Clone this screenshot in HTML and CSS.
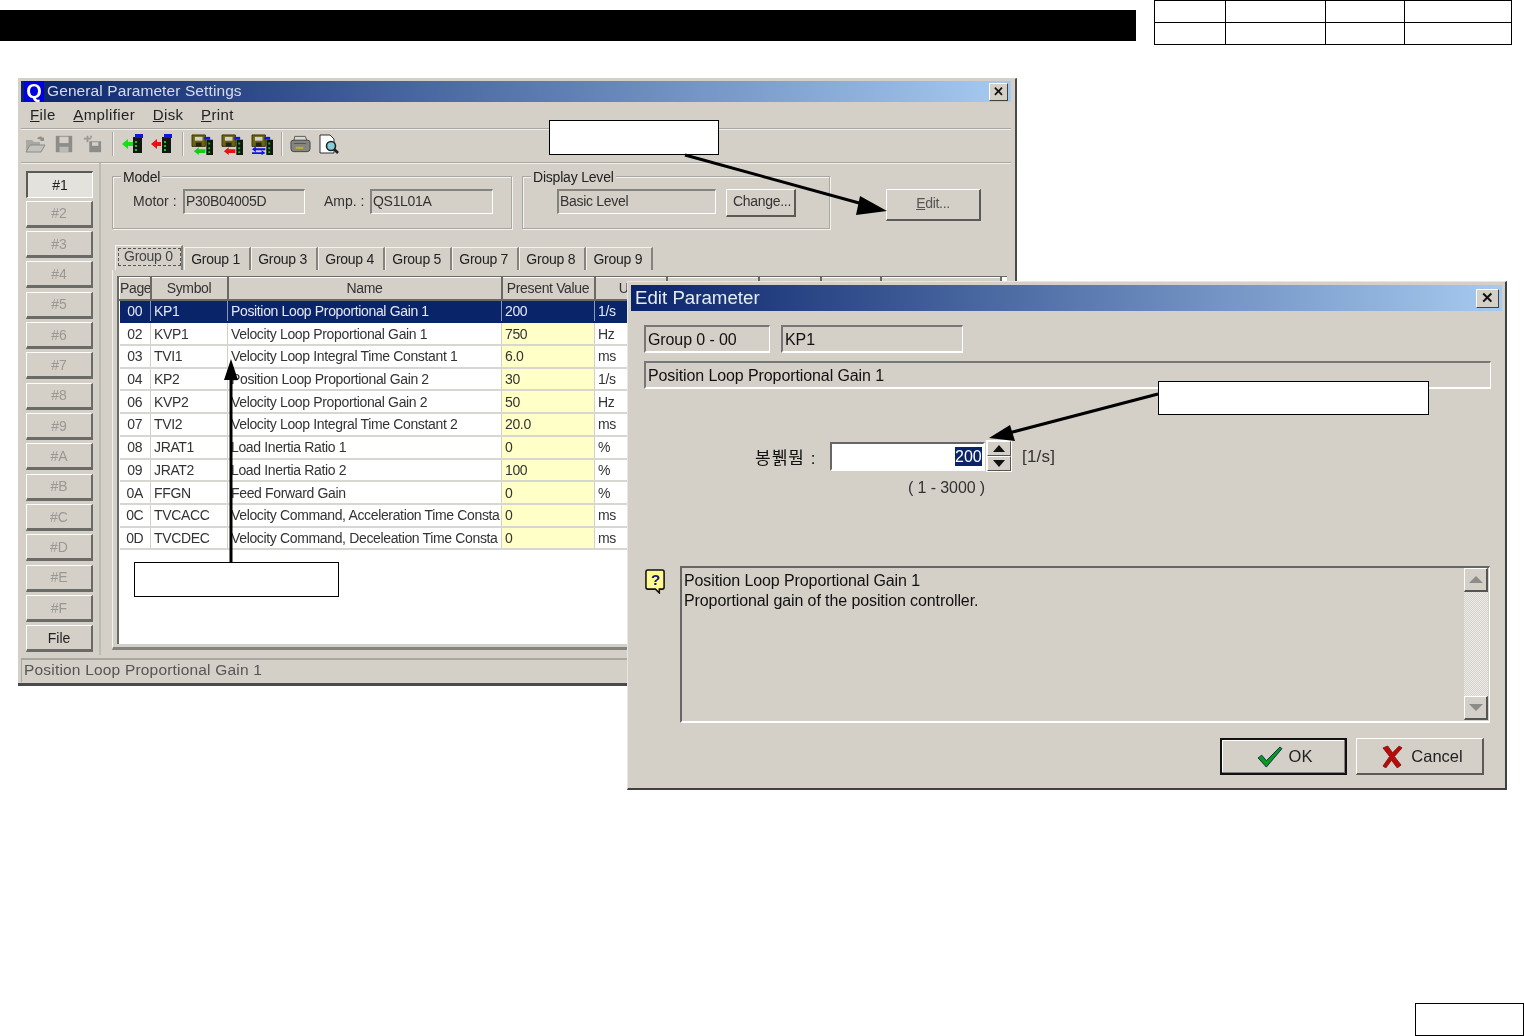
FILE: index.html
```html
<!DOCTYPE html>
<html lang="en">
<head>
<meta charset="utf-8">
<title>General Parameter Settings</title>
<link rel="stylesheet" href="styles.css">
</head>
<body>
<svg class="defs" width="0" height="0" aria-hidden="true">
  <defs>
    <symbol id="folder" viewBox="0 0 22 20"><path d="M2 6h6l2 2h6v3H7L3 17H2z" fill="#a8a8a4"/><path d="M6 11h15l-4 7H2z" fill="#c4c2bc" stroke="#8a8a86"/><path d="M13 5c2-3 4-3 6-1l1-1v4h-4l1-1c-1-1-2-1-4-1z" fill="#8f8f8b"/></symbol>
    <symbol id="disk" viewBox="0 0 22 20"><path d="M2 1h18v18H2z" fill="#8c8c88"/><path d="M6 2h10v7H6z" fill="#d4d0c8"/><path d="M6 13h10v6H6z" fill="#bcbab4"/></symbol>
    <symbol id="disks" viewBox="0 0 22 20"><path d="M8 7h13v12H8z" fill="#8c8c88"/><path d="M11 8h7v4h-7z" fill="#d4d0c8"/><path d="M2 3h3V1h2v2h3v2H7v3H5V5H2z" fill="#9a9a96"/><path d="M9 1h2v2H9z" fill="#9a9a96"/></symbol>
    <symbol id="pc" viewBox="0 0 24 22"><path d="M1 1h14v12H1z" fill="#6a6410" stroke="#3a3808"/><path d="M4 3h8v4H4z" fill="#d4d0c8"/><path d="M5 9h6v4H5z" fill="#222"/><path d="M14 3h6v3h-6z" fill="#1414e0"/><path d="M16 6h7v16h-7z" fill="#101810"/><path d="M18 9h2v2h-2zM18 14h2v2h-2zM18 18h2v2h-2z" fill="#20b020"/></symbol>
    <symbol id="printer" viewBox="0 0 22 20"><path d="M5 2h11l2 5H4z" fill="#d8d8d4" stroke="#555"/><path d="M1 8q0-2 3-2h14q3 0 3 2v7q0 3-3 3H4q-3 0-3-3z" fill="#85857f" stroke="#444"/><path d="M6 13h8v2H6z" fill="#c8b020"/><path d="M4 9h13v1H4z" fill="#555"/></symbol>
    <symbol id="preview" viewBox="0 0 22 20"><path d="M2 1h10l4 4v14H2z" fill="#fff" stroke="#333"/><circle cx="13" cy="12" r="4.5" fill="#7fd0d8" stroke="#222" stroke-width="1.6"/><path d="M16 15l4 4" stroke="#222" stroke-width="2.6"/></symbol>
  </defs>
</svg>
<div class="page">
  <header class="head">
    <div class="bar"></div>
    <table class="stamp">
      <tr><td class="s1"></td><td class="s2"></td><td class="s3"></td><td class="s4"></td></tr>
      <tr><td></td><td></td><td></td><td></td></tr>
    </table>
  </header>

  <section class="win main">
    <div class="title">
      <span class="qlogo">Q</span>
      <span class="title-text">General Parameter Settings</span>
      <span class="close main-close">✕</span>
    </div>
    <nav class="menu">
      <span><u>F</u>ile</span><span><u>A</u>mplifier</span><span><u>D</u>isk</span><span><u>P</u>rint</span>
    </nav>
    <div class="tools">
      <svg class="ti" width="22" height="20"><use href="#folder"/></svg>
      <svg class="ti tg" width="20" height="20"><use href="#disk"/></svg>
      <svg class="ti tw" width="20" height="20"><use href="#disks"/></svg>
      <i class="tsep"></i>
      <svg class="ti" width="22" height="20" viewBox="0 0 22 20"><path d="M1 10l6-5v3h5v4H7v3z" fill="#14e014"/><path d="M12 3h9v16h-9z" fill="#101810"/><path d="M14 0h8v4h-8z" fill="#1414e0"/><path d="M14 7h2v2h-2zM14 11h2v2h-2zM14 15h2v2h-2z" fill="#20c020"/></svg>
      <svg class="ti tx" width="22" height="20" viewBox="0 0 22 20"><path d="M1 10l6-5v3h4v4H7v3z" fill="#ee1010"/><path d="M12 3h9v16h-9z" fill="#101810"/><path d="M14 0h8v4h-8z" fill="#1414e0"/><path d="M14 7h2v2h-2zM14 11h2v2h-2zM14 15h2v2h-2z" fill="#20c020"/></svg>
      <i class="tsep"></i>
      <svg class="ti" width="23" height="21" viewBox="0 0 24 22"><use href="#pc"/><path d="M3 18l5-4v2h7v4H8v2z" fill="#10d010"/></svg>
      <svg class="ti" width="23" height="21" viewBox="0 0 24 22"><use href="#pc"/><path d="M3 18l5-4v2h7v4H8v2z" fill="#e81010"/></svg>
      <svg class="ti ty" width="23" height="21" viewBox="0 0 24 22"><use href="#pc"/><path d="M1 16l4-3v2h10v2H5v2zM15 20l-4 2v-1H1v-2h10v-2z" fill="#1010e8"/></svg>
      <i class="tsep"></i>
      <svg class="ti" width="21" height="20"><use href="#printer"/></svg>
      <svg class="ti" width="22" height="20"><use href="#preview"/></svg>
    </div>
    <div class="work">
      <aside class="side">
        <button class="pbtn on">#1</button>
        <button class="pbtn">#2</button><button class="pbtn">#3</button><button class="pbtn">#4</button>
        <button class="pbtn">#5</button><button class="pbtn">#6</button><button class="pbtn">#7</button>
        <button class="pbtn">#8</button><button class="pbtn">#9</button><button class="pbtn">#A</button>
        <button class="pbtn">#B</button><button class="pbtn">#C</button><button class="pbtn">#D</button>
        <button class="pbtn">#E</button><button class="pbtn">#F</button>
        <button class="pbtn file">File</button>
      </aside>
      <div class="content">
        <div class="groups">
          <div class="grp model">
            <span class="legend">Model</span>
            <label class="lab l-motor">Motor :</label><span class="field f-motor">P30B04005D</span>
            <label class="lab l-amp">Amp. :</label><span class="field f-amp">QS1L01A</span>
          </div>
          <div class="grp level">
            <span class="legend">Display Level</span>
            <span class="field f-level">Basic Level</span>
            <button class="wbtn change">Change...</button>
          </div>
          <button class="wbtn edit"><span><u>E</u>dit...</span></button>
        </div>
        <div class="tabs">
          <span class="tab active"><span>Group 0</span></span>
          <span class="tab">Group 1</span><span class="tab">Group 3</span><span class="tab">Group 4</span>
          <span class="tab">Group 5</span><span class="tab">Group 7</span><span class="tab">Group 8</span><span class="tab">Group 9</span>
        </div>
        <div class="panel">
          <div class="grid">
            <table class="params">
              <colgroup><col class="c1"><col class="c2"><col class="c3"><col class="c4"><col class="c5"><col class="c6"><col class="c7"><col class="c8"><col class="c9"></colgroup>
              <thead><tr><th>Page</th><th>Symbol</th><th>Name</th><th>Present Value</th><th>Unit</th><th></th><th></th><th></th><th></th></tr></thead>
              <tbody>
                <tr class="sel"><td class="n">00</td><td>KP1</td><td>Position Loop Proportional Gain 1</td><td>200</td><td>1/s</td></tr>
                <tr><td class="n">02</td><td>KVP1</td><td>Velocity Loop Proportional Gain 1</td><td class="val">750</td><td>Hz</td></tr>
                <tr><td class="n">03</td><td>TVI1</td><td>Velocity Loop Integral Time Constant 1</td><td class="val">6.0</td><td>ms</td></tr>
                <tr><td class="n">04</td><td>KP2</td><td>Position Loop Proportional Gain 2</td><td class="val">30</td><td>1/s</td></tr>
                <tr><td class="n">06</td><td>KVP2</td><td>Velocity Loop Proportional Gain 2</td><td class="val">50</td><td>Hz</td></tr>
                <tr><td class="n">07</td><td>TVI2</td><td>Velocity Loop Integral Time Constant 2</td><td class="val">20.0</td><td>ms</td></tr>
                <tr><td class="n">08</td><td>JRAT1</td><td>Load Inertia Ratio 1</td><td class="val">0</td><td>%</td></tr>
                <tr><td class="n">09</td><td>JRAT2</td><td>Load Inertia Ratio 2</td><td class="val">100</td><td>%</td></tr>
                <tr><td class="n">0A</td><td>FFGN</td><td>Feed Forward Gain</td><td class="val">0</td><td>%</td></tr>
                <tr><td class="n">0C</td><td>TVCACC</td><td><span class="clip">Velocity Command, Acceleration Time Consta</span></td><td class="val">0</td><td>ms</td></tr>
                <tr><td class="n">0D</td><td>TVCDEC</td><td><span class="clip">Velocity Command, Deceleation Time Consta</span></td><td class="val">0</td><td>ms</td></tr>
              </tbody>
            </table>
          </div>
        </div>
      </div>
    </div>
    <footer class="status">Position Loop Proportional Gain 1</footer>
  </section>

  <section class="win dialog">
    <div class="title dtitle">
      <span class="title-text">Edit Parameter</span>
      <span class="close dlg-close">✕</span>
    </div>
    <div class="dbody">
      <div class="row r1">
        <span class="dfield d-group">Group 0 - 00</span>
        <span class="dfield d-sym">KP1</span>
      </div>
      <span class="dfield d-name">Position Loop Proportional Gain 1</span>
      <div class="row r2">
        <span class="dlabel">봉뷁뭠 :</span>
        <span class="input"><mark>200</mark></span>
        <span class="spin">
          <span class="sb"><svg width="12" height="7" viewBox="0 0 12 7"><path d="M6 0l6 7H0z" fill="#111"/></svg></span>
          <span class="sb"><svg width="12" height="7" viewBox="0 0 12 7"><path d="M6 7L0 0h12z" fill="#111"/></svg></span>
        </span>
        <span class="unit">[1/s]</span>
      </div>
      <div class="range">( 1 - 3000 )</div>
      <div class="row r3">
        <svg class="help" width="21" height="25" viewBox="0 0 22 26"><path d="M3 1h15q2 0 2 2v16q0 2-2 2h-3v4l-4-4H3q-2 0-2-2V3q0-2 2-2z" fill="#fffb90" stroke="#111" stroke-width="1.6"/><text x="11" y="17" text-anchor="middle" class="help-q">?</text></svg>
        <div class="memo">
          <div class="memo-text">Position Loop Proportional Gain 1<br>Proportional gain of the position controller.</div>
          <div class="scroll">
            <span class="sbtn"><svg width="14" height="7" viewBox="0 0 14 7"><path d="M7 0l7 7H0z" fill="#8c8c88"/></svg></span>
            <span class="strack"></span>
            <span class="sbtn"><svg width="14" height="7" viewBox="0 0 14 7"><path d="M7 7L0 0h14z" fill="#8c8c88"/></svg></span>
          </div>
        </div>
      </div>
      <div class="actions">
        <button class="dbtn ok">
          <svg width="26" height="22" viewBox="0 0 28 24"><path d="M1 13l4-3 5 6L25 1l2 2L10 23z" fill="#0a9a18" stroke="#04245a" stroke-width="1"/></svg>
          <span>OK</span>
        </button>
        <button class="dbtn cancel">
          <svg width="21" height="23" viewBox="0 0 22 24"><path d="M1 3l5-2 5 7 7-7 3 2-8 9 7 9-4 3-6-8-6 8-3-2 7-10z" fill="#b80c0c" stroke="#7a0808" stroke-width=".8"/></svg>
          <span>Cancel</span>
        </button>
      </div>
    </div>
  </section>

  <div class="note n-edit"></div>
  <div class="note n-spin"></div>
  <div class="note n-table"></div>
  <svg class="arrows" width="1524" height="1036" viewBox="0 0 1524 1036">
    <path d="M685 155L870 206" stroke="#000" stroke-width="3"/><path d="M887 211l-27-15-4 19z" fill="#000"/>
    <path d="M1158 394L1005 434" stroke="#000" stroke-width="3"/><path d="M989 438l21-13 5 16z" fill="#000"/>
    <path d="M231 562V378" stroke="#000" stroke-width="3"/><path d="M231 359l-7 21h14z" fill="#000"/>
  </svg>

  <footer class="foot"><div class="pagebox"></div></footer>
</div>
</body>
</html>
```
FILE: styles.css
```css
* { box-sizing: border-box; }
html, body { margin: 0; padding: 0; background: #fff; }
body { font-family: "Liberation Sans", Arial, "Noto Sans CJK KR", sans-serif; color: #000; }
.defs { position: absolute; }
.page { position: relative; width: 1524px; height: 1036px; overflow: hidden; display: flex; flex-direction: column; }
button { font: inherit; color: inherit; padding: 0; }

.head { display: flex; align-items: flex-start; height: 46px; }
.bar { width: 1136px; height: 31px; margin-top: 10px; background: #000; }
.stamp { margin-left: 18px; width: 358px; height: 45px; border-collapse: collapse; table-layout: fixed; }
.stamp td { border: 1px solid #000; height: 22px; padding: 0; }
.s1 { width: 71px; } .s2 { width: 100px; } .s3 { width: 79px; }

.foot { margin-top: auto; display: flex; justify-content: flex-end; }
.pagebox { width: 109px; height: 33px; border: 1px solid #000; }

/* free-floating windows on the sheet */
.win { position: absolute; background: #d4d0c8; display: flex; flex-direction: column; }
.main { left: 18px; top: 78px; width: 999px; height: 608px; padding: 2px 4px 0 3px; border-right: 2px solid #4a4a4a; border-bottom: 3px solid #4a4a4a; border-top: 1px solid #d4d0c8; filter: blur(.6px); font-size: 14px; color: #222; }
.dialog { left: 627px; top: 281px; width: 880px; height: 509px; padding: 3px 3px 0 3px; border: 1px solid #e8e6e0; border-right: 2px solid #404040; border-bottom: 2px solid #404040; font-size: 16px; color: #111; filter: blur(.3px); }

.title { height: 21px; flex: none; display: flex; align-items: center; background: linear-gradient(90deg, #0a246a, #a6caf0); color: #d8dce8; }
.main .title { padding-left: 3px; }
.qlogo { width: 20px; height: 21px; background: #0000e0; color: #fff; font: bold 20px/21px "Liberation Sans", sans-serif; text-align: center; margin-right: 3px; }
.title-text { font-size: 15.5px; letter-spacing: .1px; padding-bottom: 1px; }
.close { margin-left: auto; margin-right: 3px; display: flex; align-items: center; justify-content: center; background: #d4d0c8; color: #111; border: 1px solid; border-color: #fff #404040 #404040 #fff; font-weight: bold; }
.main-close { width: 19px; height: 18px; font-size: 13px; }
.dlg-close { width: 23px; height: 19px; font-size: 15px; margin-right: 3px; }

.menu { height: 27px; flex: none; display: flex; align-items: center; padding: 0 0 2px 9px; gap: 17.5px; font-size: 15px; letter-spacing: .4px; border-bottom: 1px solid #a9a7a1; box-shadow: 0 1px 0 #f0eee8; }
.tools { height: 34px; flex: none; display: flex; align-items: center; padding: 0 0 3px 3px; border-bottom: 1px solid #a9a7a1; box-shadow: 0 1px 0 #f0eee8; }
.ti { margin-right: 7px; flex: none; }
.tg { margin-left: 1px; margin-right: 8px; }
.tw { margin-right: 9px; }
.tx { margin-right: 9px; }
.ty { margin-right: 6px; }
.tsep { width: 2px; height: 24px; margin: 0 7px 0 1px; background: #a9a7a1; border-right: 1px solid #f4f2ec; }

.work { flex: 1; display: flex; min-height: 0; }
.side { width: 80px; flex: none; padding: 7.5px 0 0 5px; display: flex; flex-direction: column; gap: 3.33px; border-right: 2px solid #bdbbb5; height: 492px; }
.pbtn { width: 67px; height: 27px; flex: none; background: #d4d0c8; color: #9a9892; border: 1px solid; border-color: #fdfdfb #6a6a66 #6a6a66 #fdfdfb; border-width: 1px 2px 3px 1px; font-size: 14px; }
.pbtn.on { background: #e4e2dc; color: #222; border-color: #5a5a56 #fff #fff #5a5a56; border-width: 2px 1px 1px 2px; }
.pbtn.file { color: #222; }

.content { flex: 1; padding-left: 11px; min-width: 0; position: relative; }
.groups { display: flex; align-items: flex-start; height: 84px; padding-top: 13px; position: relative; }
.grp { position: relative; height: 53px; border: 1px solid #a9a7a1; box-shadow: 1px 1px 0 #f4f2ec, inset 1px 1px 0 #f4f2ec; font-size: 14px; display: flex; align-items: flex-start; padding-top: 12px; }
.model { width: 400px; }
.level { width: 308px; margin-left: 10px; }
.legend { position: absolute; left: 8px; top: -8px; background: #d4d0c8; padding: 0 2px; letter-spacing: -.2px; }
.lab { line-height: 24px; color: #333; }
.l-motor { margin-left: 20px; width: 50px; white-space: nowrap; }
.l-amp { margin-left: 19px; width: 46px; white-space: nowrap; }
.field { height: 25px; background: #d4d0c8; border: 2px solid; border-color: #85837d #fff #fff #85837d; border-right-width: 1px; border-bottom-width: 1px; padding-left: 1px; line-height: 20px; letter-spacing: -.3px; color: #333; white-space: nowrap; }
.f-motor { width: 122px; }
.f-amp { width: 123px; }
.f-level { width: 159px; margin-left: 34px; }
.wbtn { background: #d4d0c8; border: 1px solid; border-color: #fff #5a5a56 #5a5a56 #fff; border-width: 1px 2px 2px 1px; letter-spacing: -.3px; color: #333; font-size: 14px; padding-bottom: 4px; }
.change { width: 70px; height: 28px; margin-left: 10px; padding-left: 3px; }
.edit { width: 95px; height: 32px; margin: 13px 0 0 56px; }
.edit span { color: #555; }

.tabs { display: flex; height: 26px; padding-left: 3px; margin-top: -3px; align-items: flex-end; font-size: 14px; letter-spacing: -.25px; }
.tab { height: 23px; padding: 0 9px 0 6.2px; line-height: 23px; border-top: 1px solid #f4f2ec; border-left: 1px solid #f4f2ec; border-right: 2px solid #85837d; white-space: nowrap; }
.tab.active { height: 25px; padding: 2px 0 0 2px; margin-right: 1px; width: 68px; }
.tab.active span { display: block; height: 18px; line-height: 15px; padding: 0 5px; border: 1px dashed #555; color: #444; }

.panel { margin-top: 0; height: 380px; padding: 6px 4px 3px 4px; border-bottom: 3px solid #85837d; border-left: 1px solid #f4f2ec; }
.grid { height: 100%; background: #fff; border-left: 2px solid #6a6a66; overflow: hidden; border-top: 1px solid #6a6a66; }
.params { border-collapse: collapse; table-layout: fixed; width: 881px; font-size: 14px; letter-spacing: -.35px; }
.c1 { width: 31px; } .c2 { width: 77px; } .c3 { width: 274px; } .c4 { width: 93px; } .c5 { width: 72px; } .c6 { width: 92px; } .c7 { width: 62px; } .c8 { width: 60px; } .c9 { width: 120px; }
.params th { height: 22px; padding: 0; font-weight: normal; text-align: center; background: #d4d0c8; border-top: 1px solid #fff; border-left: 1px solid #fff; border-right: 2px solid #6a6a66; border-bottom: 2px solid #6a6a66; overflow: hidden; white-space: nowrap; color: #333; }
.params td { height: 22.73px; padding: 0 0 0 3px; border-right: 1px solid #d4d0c8; border-bottom: 2px solid #d8d6d0; overflow: hidden; white-space: nowrap; color: #333; line-height: 18px; }
.params td.n { text-align: center; padding: 0; }
.params td.val { background: #ffffc8; }
.params .sel td { background: #0a246a; color: #e6e8f0; border-color: #0a246a; border-right-color: #8a96ba; }
.clip { display: block; width: 270px; overflow: hidden; }

.status { height: 24px; margin: 2px 0 1px; flex: none; line-height: 20px; padding-left: 2px; border-top: 2px solid #a9a7a1; border-left: 1px solid #a9a7a1; font-size: 15.5px; letter-spacing: .19px; color: #555; }

.dtitle { height: 26px; padding-left: 4px; background: linear-gradient(90deg, #0a246a, #a6caf0); color: #e8ecf4; }
.dtitle .title-text { font-size: 18.7px; letter-spacing: 0; }
.dbody { flex: 1; padding: 14px 12px 0 13px; display: flex; flex-direction: column; letter-spacing: -.1px; }
.row { display: flex; }
.dfield { display: block; height: 28px; line-height: 25px; padding-left: 2px; border: 2px solid; border-color: #777 #fff #fff #777; border-right-width: 1px; border-bottom-width: 2px; white-space: nowrap; }
.d-group { width: 126px; }
.d-sym { width: 182px; margin-left: 11px; }
.d-name { width: 847px; margin-top: 8px; }
.r2 { margin-top: 52px; align-items: center; height: 30px; }
.dlabel { margin-left: 111px; width: 75px; white-space: nowrap; font-size: 17px; letter-spacing: 1px; }
.input { width: 155px; height: 29px; background: #fff; border: 2px solid; border-color: #666 #fff #fff #666; display: flex; justify-content: flex-end; align-items: center; padding-right: 1px; overflow: hidden; }
.input mark { background: #0a246a; color: #fff; width: 27px; height: 19px; line-height: 19px; overflow: hidden; letter-spacing: 0; }
.spin { width: 24px; height: 30px; margin-left: 2px; display: flex; flex-direction: column; outline: 1px solid #fff; }
.sb { flex: 1; background: #d4d0c8; display: flex; align-items: center; justify-content: center; border: 1px solid; border-color: #fff #555 #555 #fff; }
.unit { margin: 2px 0 0 11px; font-size: 17px; letter-spacing: .2px; color: #333; }
.range { margin: 6px 0 0 264px; color: #333; font-size: 16px; line-height: 22px; height: 22px; }
.r3 { margin-top: 67px; align-items: flex-start; }
.help { margin: 3px 14px 0 1px; flex: none; }
.help-q { font: bold 16px "Liberation Sans", sans-serif; fill: #101080; }
.memo { width: 811px; height: 157px; display: flex; justify-content: space-between; border: 2px solid; border-color: #666 #fff #fff #666; border-right-width: 1px; }
.memo-text { padding: 3px 2px; line-height: 20px; }
.scroll { width: 24px; height: 152px; margin-right: 1px; display: flex; flex-direction: column; }
.sbtn { height: 24px; flex: none; background: #d4d0c8; display: flex; align-items: center; justify-content: center; border: 1px solid; border-color: #fff #555 #555 #fff; border-width: 1px 2px 2px 1px; }
.strack { flex: 1; background: repeating-conic-gradient(#d4d0c8 0 25%, #ececea 0 50%) 0 0 / 2px 2px; }
.actions { display: flex; justify-content: flex-end; gap: 9px; margin-top: 15px; padding-right: 6px; }
.dbtn { width: 127px; height: 37px; display: flex; align-items: center; justify-content: center; gap: 6px; background: #d4d0c8; font-size: 16.5px; color: #222; border: 1px solid; border-color: #fff #5a5a56 #5a5a56 #fff; border-width: 1px 2px 2px 1px; }
.ok { border: 2px solid #111; box-shadow: inset -1px -1px 0 #808080, inset 1px 1px 0 #fff; padding-left: 2px; }
.cancel { width: 128px; padding-left: 6px; gap: 8px; }

/* annotations lying over the windows */
.note { position: absolute; background: #fff; border: 1px solid #000; }
.n-edit { left: 549px; top: 120px; width: 170px; height: 35px; }
.n-spin { left: 1158px; top: 381px; width: 271px; height: 34px; }
.n-table { left: 134px; top: 562px; width: 205px; height: 35px; }
.arrows { position: absolute; left: 0; top: 0; pointer-events: none; }
```
